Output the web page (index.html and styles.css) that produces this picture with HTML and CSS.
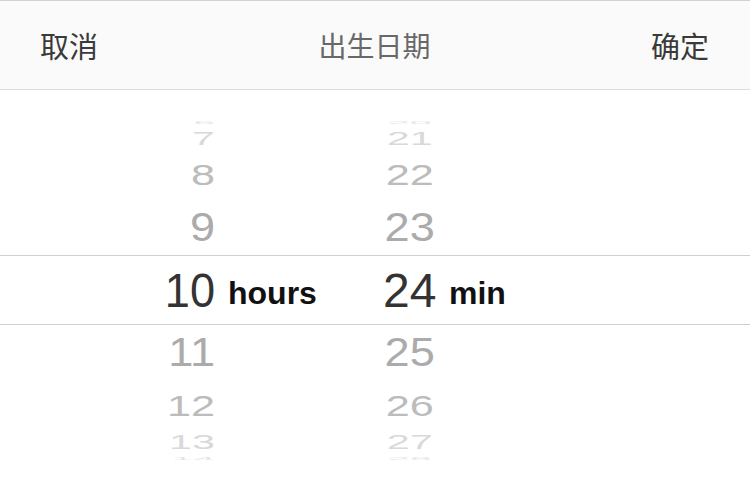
FILE: index.html
```html
<!DOCTYPE html>
<html lang="zh">
<head>
<meta charset="utf-8">
<title>出生日期</title>
<link rel="stylesheet" href="styles.css">
</head>
<body>
<div class="sheet">
  <div class="toolbar">
    <span class="btn">取消</span>
    <span class="title">出生日期</span>
    <span class="btn">确定</span>
  </div>
  <div class="picker">
    <div class="row r6"><span class="hour">6</span><span class="min">20</span></div>
    <div class="row r7"><span class="hour">7</span><span class="min">21</span></div>
    <div class="row r8"><span class="hour">8</span><span class="min">22</span></div>
    <div class="row r9"><span class="hour">9</span><span class="min">23</span></div>
    <div class="row sel">
      <span class="hour">10</span><span class="unit u-hour">hours</span>
      <span class="min">24</span><span class="unit u-min">min</span>
    </div>
    <div class="row r11"><span class="hour">11</span><span class="min">25</span></div>
    <div class="row r12"><span class="hour">12</span><span class="min">26</span></div>
    <div class="row r13"><span class="hour">13</span><span class="min">27</span></div>
    <div class="row r14"><span class="hour">14</span><span class="min">28</span></div>
  </div>
</div>
</body>
</html>
```
FILE: styles.css
```css
html, body {
  margin: 0;
  padding: 0;
  background: #ffffff;
}
.sheet {
  width: 750px;
  height: 489px;
  overflow: hidden;
  background: #ffffff;
}
.toolbar {
  height: 88px;
  border-top: 1px solid #d2d2d2;
  border-bottom: 1px solid #dcdcdc;
  background: #fafafa;
  display: flex;
  align-items: center;
  justify-content: space-between;
  padding: 0 41px 0 40px;
  font-family: "Noto Sans CJK SC", "Noto Sans", sans-serif;
}
.btn {
  font-size: 29px;
  color: #3a3a3a;
  line-height: 1;
}
.title {
  font-size: 28px;
  color: #686868;
  line-height: 1;
}
.picker {
  padding-top: 26px;
  display: flex;
  flex-direction: column;
  font-family: "Liberation Sans", Arial, sans-serif;
}
.row {
  display: grid;
  grid-template-columns: 215px 168px 54px 1fr;
  grid-template-rows: minmax(0, 1fr);
  align-items: center;
  overflow: hidden;
}
.hour {
  grid-column: 1;
  grid-row: 1;
  text-align: right;
  font-size: 48px;
  line-height: 1;
  transform-origin: right center;
}
.min {
  grid-column: 3;
  grid-row: 1;
  text-align: left;
  font-size: 48px;
  line-height: 1;
  transform-origin: center center;
}
.unit {
  grid-row: 1;
  font-weight: bold;
  font-size: 32px;
  line-height: 1;
  color: #111111;
  margin-top: 6px;
}
.u-hour {
  grid-column: 2;
  padding-left: 13px;
}
.u-min {
  grid-column: 4;
  padding-left: 12px;
}
.sel {
  height: 68px;
  border-top: 1px solid #cfcfcf;
  border-bottom: 1px solid #cfcfcf;
}
.sel .hour, .sel .min {
  color: #333333;
  margin-top: 2px;
}
.sel .hour {
  transform: scaleX(0.94);
}
.r6 { height: 14px; }
.r7 { height: 18px; }
.r8 { height: 53px; }
.r9 { height: 54px; }
.r11 { height: 55px; }
.r12 { height: 51px; }
.r13 { height: 21px; }
.r14 { height: 14px; }

.r6 .hour, .r6 .min, .r14 .hour, .r14 .min {
  color: #e6e6e6;
  transform: scale(0.82, 0.07);
}
.r7 .hour, .r7 .min {
  color: #d9d9d9;
  transform: scale(0.86, 0.37);
}
.r13 .hour, .r13 .min {
  color: #d9d9d9;
  transform: scale(0.86, 0.42);
}
.r8 .hour, .r8 .min {
  color: #bcbcbc;
  transform: scale(0.9, 0.63);
}
.r12 .hour, .r12 .min {
  color: #bcbcbc;
  transform: scale(0.9, 0.6);
}
.r9 .hour, .r9 .min, .r11 .hour, .r11 .min {
  color: #ababab;
  transform: scale(0.94, 0.83);
}
```
